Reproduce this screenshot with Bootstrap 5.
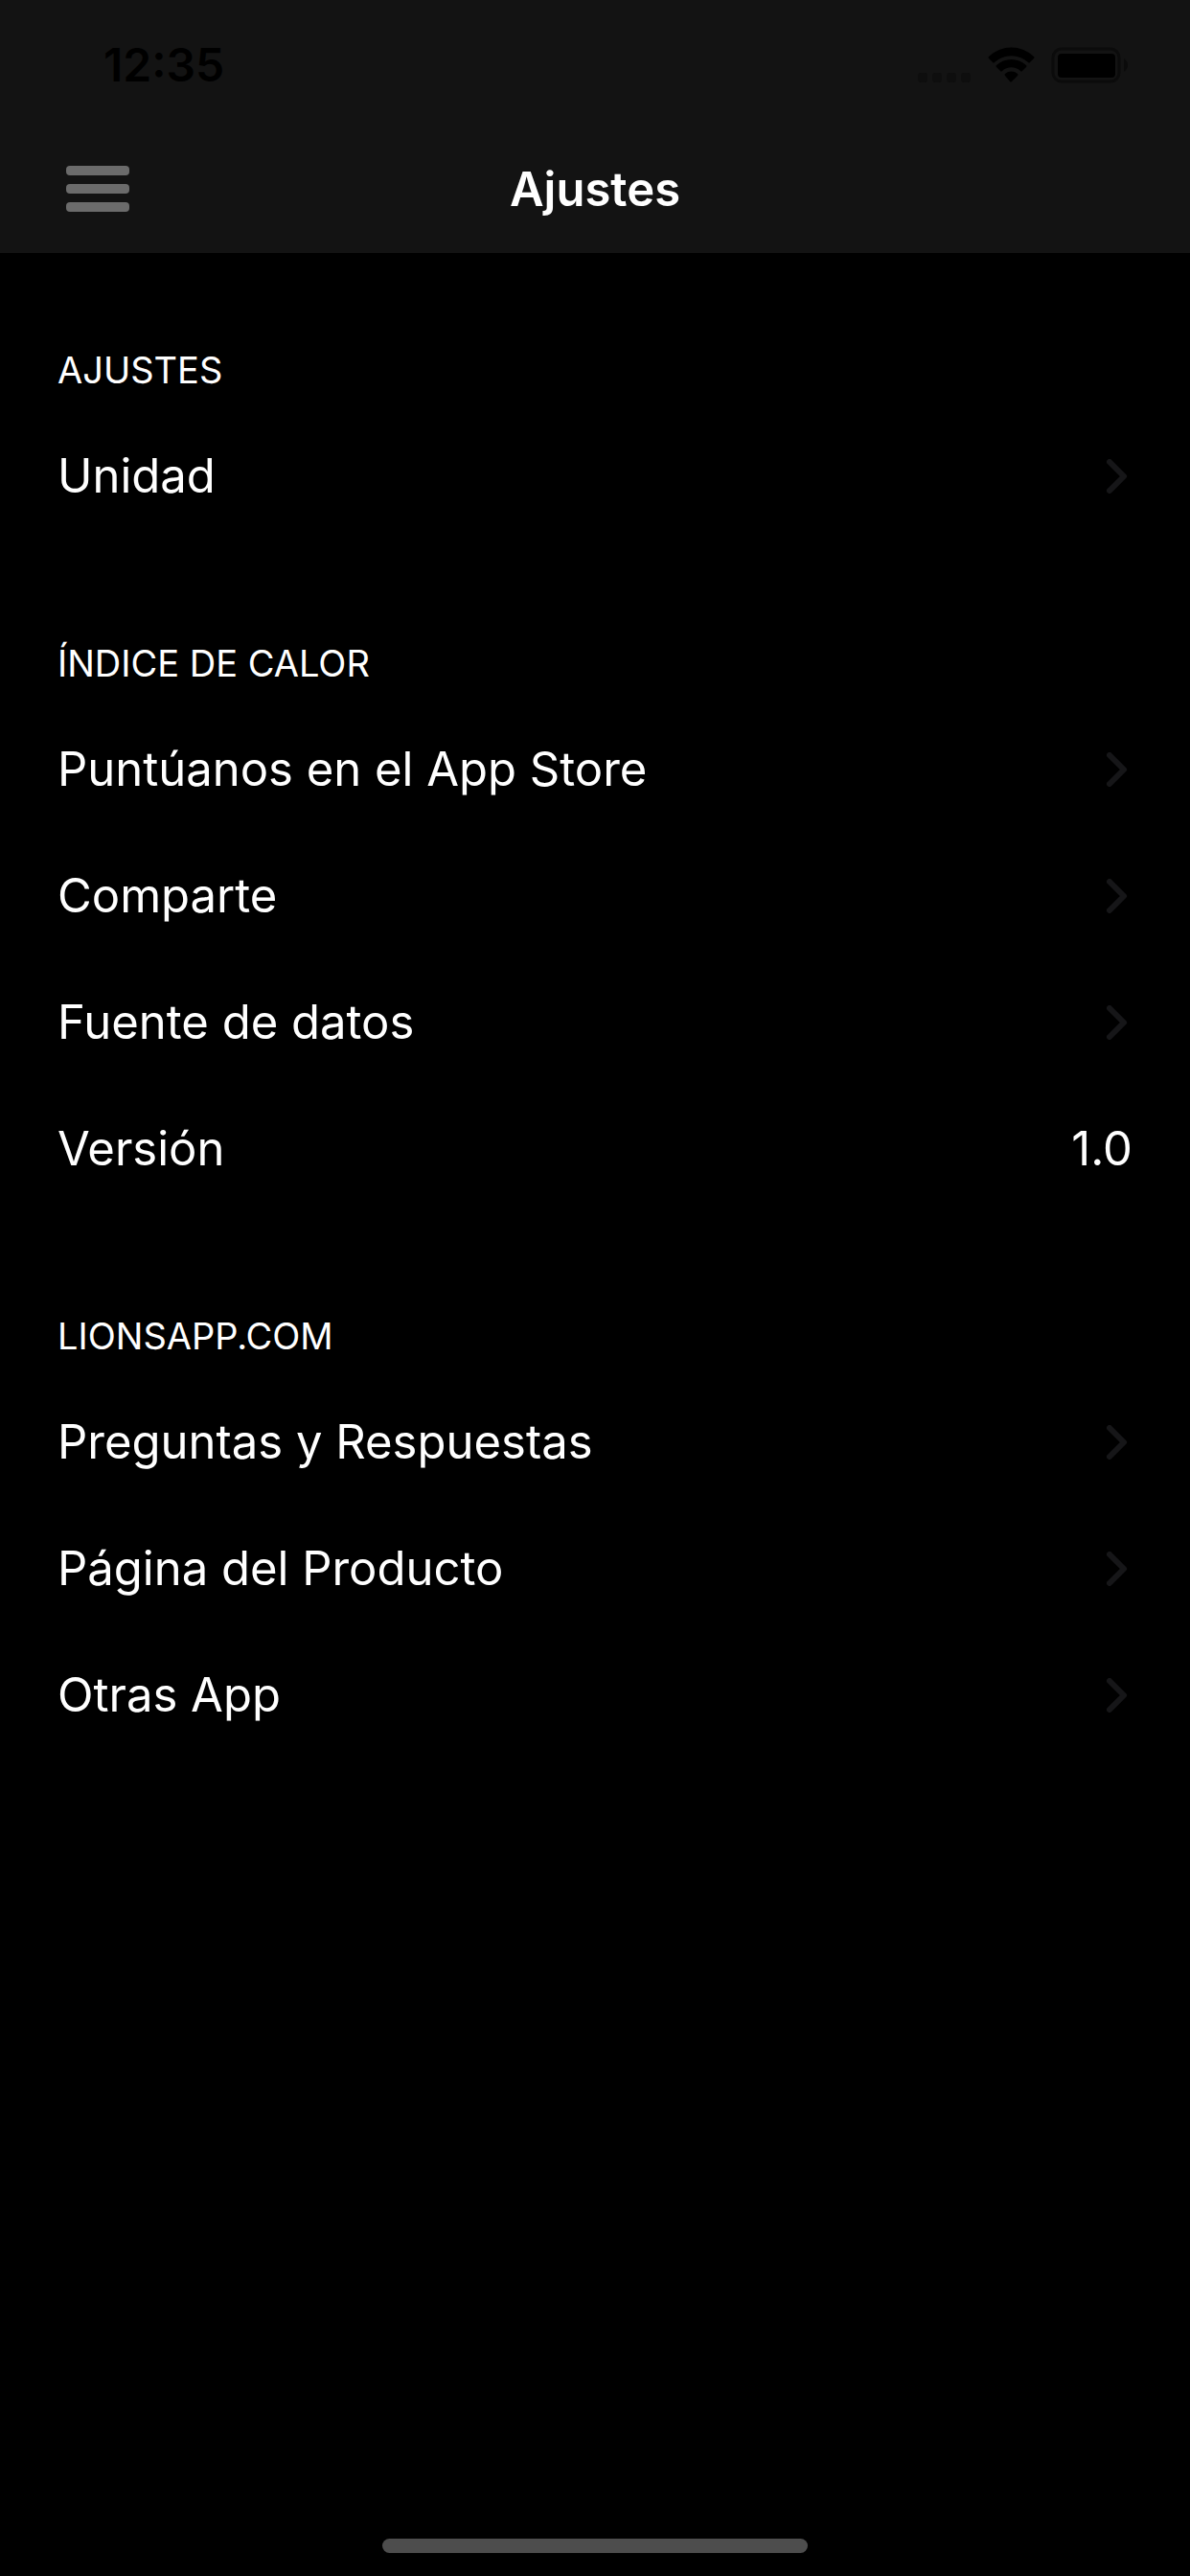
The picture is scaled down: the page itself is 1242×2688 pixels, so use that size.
<!DOCTYPE html>
<html lang="es" data-bs-theme="dark">
<head>
<meta charset="utf-8">
<meta name="viewport" content="width=device-width, initial-scale=1">
<title>Ajustes</title>
<link href="https://cdn.jsdelivr.net/npm/bootstrap@5.3.0/dist/css/bootstrap.min.css" rel="stylesheet">
<style>
  body { background: #000; color: #fff; font-family: Inter, "Liberation Sans", sans-serif; }
  .app-bar { background: #131313; }
  .status-bar { height: 132px; padding-left: 108px; padding-right: 64px; color: #000; }
  .status-time { font-size: 48px; line-height: 56px; font-weight: 600; }
  .title-bar { height: 132px; padding: 0 60px; }
  .title-bar h1 { font-size: 49px; line-height: 60px; font-weight: 600; }
  .menu-btn { padding: 16px 9px 18px; line-height: 0; }
  .setting-head { font-size: 38px; line-height: 48px; font-weight: 400; padding: 105px 60px 21px; margin: 0; }
  .setting-group:first-child .setting-head { padding-top: 98px; }
  .setting-list { --bs-list-group-bg: transparent; --bs-list-group-color: #fff; --bs-list-group-action-color: #fff; }
  .setting-row { font-size: 49px; line-height: 132px; padding: 0 60px; }
  .home-bar { width: 444px; height: 15px; background: #4d4d4d; margin-bottom: 24px; }
</style>
<script src="https://cdn.jsdelivr.net/npm/bootstrap@5.3.0/dist/js/bootstrap.bundle.min.js" defer></script>
</head>
<body class="d-flex flex-column min-vh-100">
<svg class="d-none" aria-hidden="true">
  <symbol id="chevron" viewBox="0 0 27 36">
    <path d="M3 3 18 18 3 33" fill="none" stroke="#161618" stroke-width="6" stroke-linecap="round" stroke-linejoin="round"/>
  </symbol>
</svg>

<header class="app-bar">
  <div class="status-bar d-flex align-items-center justify-content-between pt-1">
    <span class="status-time">12:35</span>
    <div class="d-flex align-items-center">
      <svg width="220" height="38" viewBox="0 0 220 38" role="img" aria-label="Wi-Fi y batería">
        <g fill="#0e0e0e">
          <rect x="0" y="27" width="10" height="10" rx="3"/><rect x="15" y="27" width="10" height="10" rx="3"/>
          <rect x="30" y="27" width="10" height="10" rx="3"/><rect x="45" y="27" width="10" height="10" rx="3"/>
        </g>
        <path d="M74 12Q73 11 74 10A34 34 0 0 1 121 10Q122 11 121 12L117 16Q116 17 115 16A26 26 0 0 0 80 16Q79 17 78 16ZM82 21Q81 20 82 19A23 23 0 0 1 113 19Q114 20 113 21L109 25Q108 26 107 25A14 14 0 0 0 88 25Q87 26 86 25ZM91 30Q90 29 91 28A10 10 0 0 1 104 28Q105 29 104 30L98 36Q97 37 96 36Z" fill="#000"/>
        <rect x="141" y="2" width="69" height="34" rx="9" fill="none" stroke="#0b0b0b" stroke-width="3"/>
        <rect x="146" y="7" width="60" height="25" rx="4" fill="#000"/>
        <path d="M215 12Q219 15 219 19T215 26Z" fill="#0b0b0b"/>
      </svg>
    </div>
  </div>
  <nav class="title-bar d-flex align-items-center">
    <div class="col d-flex">
      <button type="button" class="menu-btn btn border-0" aria-label="Menú">
        <svg width="66" height="48" viewBox="0 0 66 48" fill="#6b6b6b"><rect y="0" width="66" height="10" rx="4"/><rect y="19" width="66" height="10" rx="4"/><rect y="38" width="66" height="10" rx="4"/></svg>
      </button>
    </div>
    <h1 class="m-0">Ajustes</h1>
    <div class="col"></div>
  </nav>
</header>

<main class="flex-grow-1">
  <section class="setting-group">
    <h2 class="setting-head">AJUSTES</h2>
    <div class="setting-list list-group list-group-flush">
      <a href="#" class="setting-row list-group-item list-group-item-action border-0 d-flex align-items-center justify-content-between">Unidad<svg width="27" height="36"><use href="#chevron"/></svg></a>
    </div>
  </section>
  <section class="setting-group">
    <h2 class="setting-head">ÍNDICE DE CALOR</h2>
    <div class="setting-list list-group list-group-flush">
      <a href="#" class="setting-row list-group-item list-group-item-action border-0 d-flex align-items-center justify-content-between">Puntúanos en el App Store<svg width="27" height="36"><use href="#chevron"/></svg></a>
      <a href="#" class="setting-row list-group-item list-group-item-action border-0 d-flex align-items-center justify-content-between">Comparte<svg width="27" height="36"><use href="#chevron"/></svg></a>
      <a href="#" class="setting-row list-group-item list-group-item-action border-0 d-flex align-items-center justify-content-between">Fuente de datos<svg width="27" height="36"><use href="#chevron"/></svg></a>
      <div class="setting-row list-group-item border-0 d-flex align-items-center justify-content-between"><span>Versión</span><span>1.0</span></div>
    </div>
  </section>
  <section class="setting-group">
    <h2 class="setting-head">LIONSAPP.COM</h2>
    <div class="setting-list list-group list-group-flush">
      <a href="#" class="setting-row list-group-item list-group-item-action border-0 d-flex align-items-center justify-content-between">Preguntas y Respuestas<svg width="27" height="36"><use href="#chevron"/></svg></a>
      <a href="#" class="setting-row list-group-item list-group-item-action border-0 d-flex align-items-center justify-content-between">Página del Producto<svg width="27" height="36"><use href="#chevron"/></svg></a>
      <a href="#" class="setting-row list-group-item list-group-item-action border-0 d-flex align-items-center justify-content-between">Otras App<svg width="27" height="36"><use href="#chevron"/></svg></a>
    </div>
  </section>
</main>

<footer class="d-flex justify-content-center">
  <div class="home-bar rounded-pill"></div>
</footer>
</body>
</html>
